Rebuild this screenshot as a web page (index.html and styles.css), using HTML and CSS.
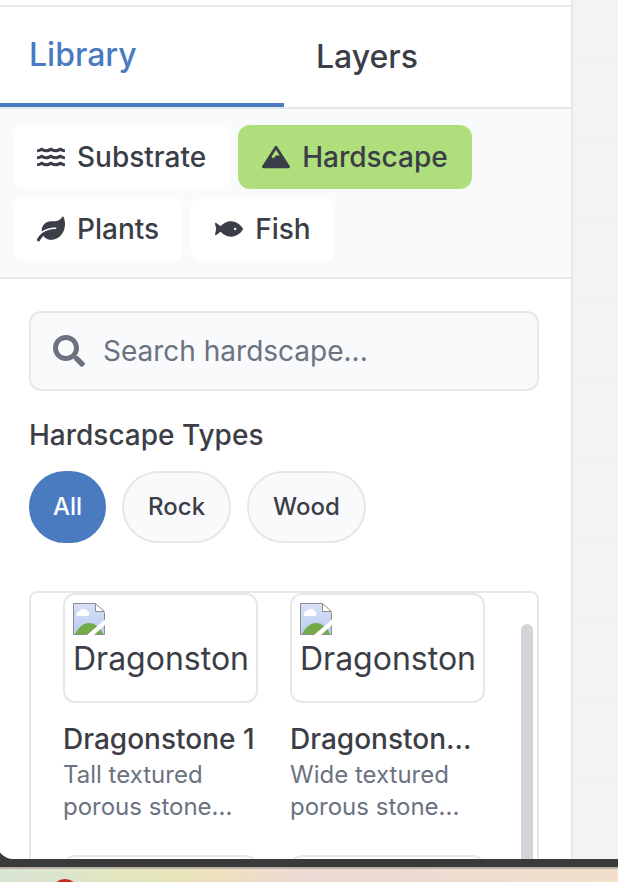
FILE: index.html
```html
<!DOCTYPE html>
<html lang="en">
<head>
<meta charset="utf-8">
<meta name="viewport" content="width=device-width, initial-scale=1">
<title>Library</title>
<link rel="stylesheet" href="styles.css">
</head>
<body>
<svg class="sprite" aria-hidden="true">
  <symbol id="broken" viewBox="0 0 32 32">
    <linearGradient id="sky" x1="0" y1="0" x2="0" y2="1"><stop offset="0" stop-color="#d6e0f7"/><stop offset="1" stop-color="#bccbee"/></linearGradient>
    <path d="M1 1h21l9 9v21H1z" fill="url(#sky)"/>
    <path d="M2 31c4-7 8-11 14-11s11 4 14 11z" fill="#75aa4b"/>
    <path d="M4 13c-1-2 0-5 3-5 1-3 6-3 7 0 3 0 3 5 1 5z" fill="#fff"/>
    <path d="M.5 .5h21.700l9.300 9.300v21.700H.5z" fill="none" stroke="#8c8c8c"/>
    <path d="M22.500 .5v8h9z" fill="#fff" stroke="#8c8c8c"/>
    <path d="M32 16.500v5.500L21 32h-7z" fill="#fff"/>
  </symbol>
</svg>
<div class="window">
  <aside class="panel">
    <div class="panel-top"></div>
    <nav class="tabs">
      <button class="tab active" type="button">Library</button>
      <button class="tab" type="button">Layers</button>
    </nav>
    <div class="categories">
      <button class="category" type="button">
        <svg class="icon" viewBox="0 0 576 512"><g id="waves"><path id="wave" d="M562.1 383.9c-21.5-2.4-42.1-10.5-57.9-22.9-14.1-11.1-34.2-11.3-48.2 0-37.9 30.4-107.2 30.4-145.7-1.5-13.5-11.2-33-9.1-46.7 1.8-38 30.1-106.9 30-145.2-1.7-13.5-11.2-33.3-8.9-47.1 2-15.5 12.2-36 20.1-57.7 22.4-7.9.8-13.6 7.8-13.6 15.7v32.2c0 9.1 7.6 16.8 16.7 16 28.8-2.5 56.1-11.4 79.4-25.9 56.5 34.6 137 34.1 192 0 56.5 34.6 137 34.1 192 0 23.3 14.2 50.9 23.3 79.1 25.8 9.1.8 16.7-6.9 16.7-16v-31.6c.1-8-5.7-15.4-13.8-16.300z"/><use href="#wave" y="-144"/><use href="#wave" y="-288"/></g></svg>
        Substrate
      </button>
      <button class="category selected" type="button">
        <svg class="icon" viewBox="0 0 640 512"><path d="M634.920 462.700l-288-448C341.030 5.540 330.890 0 320 0s-21.030 5.540-26.920 14.700l-288 448a32 32 0 0 0-1.170 32.640A32 32 0 0 0 32 512h576c11.710 0 22.480-6.390 28.090-16.670a32 32 0 0 0-1.170-32.630zM320 91.180L405.390 224H320l-64 64-38.060-38.060L320 91.180z"/></svg>
        Hardscape
      </button>
      <button class="category" type="button">
        <svg class="icon" viewBox="0 0 576 512"><path d="M546.2 9.7c-5.6-12.5-21.6-13-28.3-1.2C486.9 62.4 431.4 96 368 96h-80C182 96 96 182 96 288c0 7 .8 13.700 1.5 20.5C161.3 262.8 253.4 224 384 224c8.800 0 16 7.200 16 16s-7.200 16-16 16C132.600 256 26 410.100 2.400 468c-6.600 16.300 1.200 34.900 17.500 41.600 16.400 6.800 35-1.100 41.800-17.300 1.500-3.600 20.900-47.900 71.900-90.600 32.400 43.900 94 85.800 174.900 77.200C465.500 467.500 576 326.700 576 154.300c0-50.200-10.800-102.200-29.800-144.600z"/></svg>
        Plants
      </button>
      <button class="category" type="button">
        <svg class="icon" viewBox="0 0 576 512"><path d="M327.1 96c-89.970 0-168.540 54.770-212.270 101.630L27.5 131.580c-12.130-9.180-30.240.6-27.140 14.660L24.540 256 .35 365.770c-3.1 14.060 15.010 23.830 27.140 14.660l87.330-66.050C158.550 361.230 237.130 416 327.100 416 464.560 416 576 288 576 256S464.560 96 327.100 96zm87.430 184c-13.250 0-24-10.750-24-24 0-13.260 10.750-24 24-24 13.260 0 24 10.740 24 24 0 13.250-10.750 24-24 24z"/></svg>
        Fish
      </button>
    </div>
    <div class="content">
      <label class="search">
        <svg class="search-icon" viewBox="0 0 512 512"><path d="M505 442.700L405.300 343c-4.500-4.500-10.600-7-17-7H372c27.600-35.300 44-79.700 44-128C416 93.100 322.900 0 208 0S0 93.100 0 208s93.100 208 208 208c48.300 0 92.700-16.400 128-44v16.300c0 6.400 2.500 12.500 7 17l99.700 99.700c9.400 9.400 24.600 9.400 33.900 0l28.300-28.300c9.400-9.400 9.400-24.600.1-34zM208 336c-70.700 0-128-57.200-128-128 0-70.700 57.200-128 128-128 70.700 0 128 57.200 128 128 0 70.700-57.200 128-128 128z"/></svg>
        <input class="search-input" type="text" placeholder="Search hardscape..." aria-label="Search hardscape">
      </label>
      <h2 class="heading">Hardscape Types</h2>
      <div class="pills">
        <button class="pill on" type="button">All</button>
        <button class="pill" type="button">Rock</button>
        <button class="pill" type="button">Wood</button>
      </div>
      <div class="list">
        <div class="grid">
          <article class="item">
            <div class="thumb"><svg class="broken"><use href="#broken"/></svg><span class="alt">Dragonston</span></div>
            <h3 class="name">Dragonstone 1</h3>
            <p class="desc">Tall textured<br>porous stone...</p>
          </article>
          <article class="item">
            <div class="thumb"><svg class="broken"><use href="#broken"/></svg><span class="alt">Dragonston</span></div>
            <h3 class="name">Dragonston...</h3>
            <p class="desc">Wide textured<br>porous stone...</p>
          </article>
          <article class="item"><div class="thumb"></div></article>
          <article class="item"><div class="thumb"></div></article>
        </div>
        <div class="scrollbar"></div>
      </div>
    </div>
  </aside>
  <main class="canvas"></main>
</div>
<div class="desktop"><span class="badge"></span></div>
</body>
</html>
```

FILE: styles.css
```css
* {
  box-sizing: border-box;
}

body {
  margin: 0;
  height: 100vh;
  display: flex;
  flex-direction: column;
  overflow: hidden;
  background: #3a3a3a;
  color: #3b3e46;
  font-family: Inter, sans-serif;
}

button {
  border: 0;
  margin: 0;
  background: none;
  color: inherit;
  font-family: inherit;
  font-weight: 500;
}

h2,
h3,
p {
  margin: 0;
}

.sprite {
  position: absolute;
  width: 0;
  height: 0;
}

.window {
  flex: 1;
  min-height: 0;
  margin-left: -3px;
  display: flex;
  overflow: hidden;
  background: #fff;
  border-bottom-left-radius: 16px;
}

.panel {
  flex: 1;
  min-width: 0;
  display: flex;
  flex-direction: column;
  border-right: 2px solid #e5e7eb;
}

.panel-top {
  height: 7px;
  flex: none;
  border-bottom: 2px solid #e5e7eb;
}

.tabs {
  flex: none;
  display: flex;
  border-bottom: 2px solid #e5e7eb;
}

.tab {
  flex: 1;
  height: 100px;
  padding: 0 32px 2px;
  text-align: left;
  font-size: 32px;
}

.tab.active {
  color: #4a7abf;
  border-bottom: 4px solid #4a7abf;
}

.categories {
  flex: none;
  display: flex;
  flex-wrap: wrap;
  gap: 8px;
  padding: 16px;
  background: #f9fafc;
  border-bottom: 2px solid #e5e7eb;
}

.category {
  height: 64px;
  padding: 0 24px;
  display: flex;
  align-items: center;
  gap: 12px;
  border-radius: 12px;
  background: #fff;
  font-size: 28px;
}

.category.selected {
  background: #aedf7c;
}

.icon {
  width: 28px;
  height: 28px;
  fill: currentColor;
}

.content {
  flex: 1;
  min-height: 0;
  padding: 32px 32px 0;
  display: flex;
  flex-direction: column;
}

.search {
  flex: none;
  height: 80px;
  padding: 0 22px;
  display: flex;
  align-items: center;
  gap: 18px;
  border: 2px solid #e5e7eb;
  border-radius: 12px;
  background: #f9fafc;
}

.search-icon {
  flex: none;
  width: 32px;
  height: 32px;
  fill: #6b7280;
}

.search-input {
  flex: 1;
  min-width: 0;
  padding: 0;
  border: 0;
  outline: 0;
  background: none;
  font-family: inherit;
  font-size: 28px;
  color: inherit;
}

.search-input::placeholder {
  color: #6b7280;
}

.heading {
  flex: none;
  margin: 24px 0 16px;
  font-size: 28px;
  line-height: 40px;
  font-weight: 500;
}

.pills {
  flex: none;
  display: flex;
  gap: 16px;
  margin-bottom: 48px;
}

.pill {
  height: 72px;
  padding: 0 24px 2px;
  border: 2px solid #e5e7eb;
  border-radius: 36px;
  background: #f9fafc;
  font-size: 24px;
}

.pill.on {
  padding: 0 22px 2px;
  border-color: #4a7abf;
  background: #4a7abf;
  color: #fff;
}

.list {
  flex: 1;
  min-height: 0;
  position: relative;
  overflow: hidden;
  border: 2px solid #e5e7eb;
  border-bottom: 0;
  border-radius: 8px 8px 0 0;
}

.grid {
  display: grid;
  grid-template-columns: 1fr 1fr;
  gap: 32px;
  padding: 0 52px 0 32px;
}

.item {
  min-width: 0;
}

.thumb {
  height: 110px;
  padding: 8px;
  overflow: hidden;
  border: 2px solid #e5e7eb;
  border-radius: 12px;
}

.broken {
  display: block;
  width: 32px;
  height: 32px;
}

.alt {
  display: block;
  font-size: 32px;
  line-height: 48px;
  white-space: nowrap;
}

.name {
  margin-top: 16px;
  font-size: 28px;
  line-height: 40px;
  font-weight: 500;
  white-space: nowrap;
}

.desc {
  color: #6b7280;
  font-size: 24px;
  line-height: 32px;
}

.scrollbar {
  position: absolute;
  top: 31px;
  right: 4px;
  bottom: 0;
  width: 12px;
  border-radius: 6px 6px 0 0;
  background: #d1d5da;
}

.canvas {
  flex: 0 0 45px;
  background: repeating-linear-gradient(#f2f3f5 0 61px, #eff0f2 61px 62px, #f2f3f5 62px 80px);
}

.desktop {
  flex: none;
  position: relative;
  height: 15px;
  margin-top: 8px;
  overflow: hidden;
  border-top: 2px solid #b9b4a7;
  background: linear-gradient(90deg, #d9e5d3, #dce5cd 9%, #e3e6be 20%, #e8e4b9 29%, #efdfc0 36%, #eedad4 48%, #eed9d3 65%, #f0dccf 75%, #f1dfcb);
}

.badge {
  position: absolute;
  top: 10px;
  left: 51px;
  width: 28px;
  height: 28px;
  border-radius: 50%;
  background: #c8281e;
}
```
